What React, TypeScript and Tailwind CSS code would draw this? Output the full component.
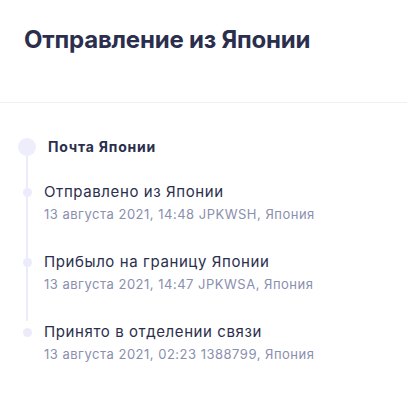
const events = [
  { title: "Отправлено из Японии", meta: "13 августа 2021, 14:48 JPKWSH, Япония" },
  { title: "Прибыло на границу Японии", meta: "13 августа 2021, 14:47 JPKWSA, Япония" },
  { title: "Принято в отделении связи", meta: "13 августа 2021, 02:23 1388799, Япония" },
];

export default function App() {
  return (
    <div className="w-[407px] h-[393px] bg-white font-['Inter',sans-serif] text-[#2b2f4d]">
      <div className="h-[103px] border-b border-[#efeff6] px-6 pt-[27px]">
        <h1 className="text-[24px] font-bold leading-[26px] tracking-[-0.2px]">Отправление из Японии</h1>
      </div>
      <div className="relative pl-[18px] pt-[35px]">
        <div className="absolute left-[26px] top-[52px] h-[166px] w-[2px] bg-[#ebebfb]" />
        <div className="relative flex items-center h-[18px]">
          <span className="w-[18px] h-[18px] rounded-full bg-[#ededfc]" />
          <span className="ml-[12px] text-[14px] font-bold leading-[18px] tracking-[0.8px]">Почта Японии</span>
        </div>
        <div className="flex flex-col gap-[26px] mt-[26px]">
          {events.map((e) => (
            <div key={e.title} className="relative flex">
              <div className="w-[18px] flex justify-center pt-[6px]">
                <span className="w-[9px] h-[9px] rounded-full bg-[#ebebfb]" />
              </div>
              <div className="ml-[8px]">
                <div className="text-[15px] leading-[20px] tracking-[0.6px]">{e.title}</div>
                <div className="text-[13px] leading-[24px] tracking-[0.5px] text-[#8a8fae]">{e.meta}</div>
              </div>
            </div>
          ))}
        </div>
      </div>
    </div>
  );
}
